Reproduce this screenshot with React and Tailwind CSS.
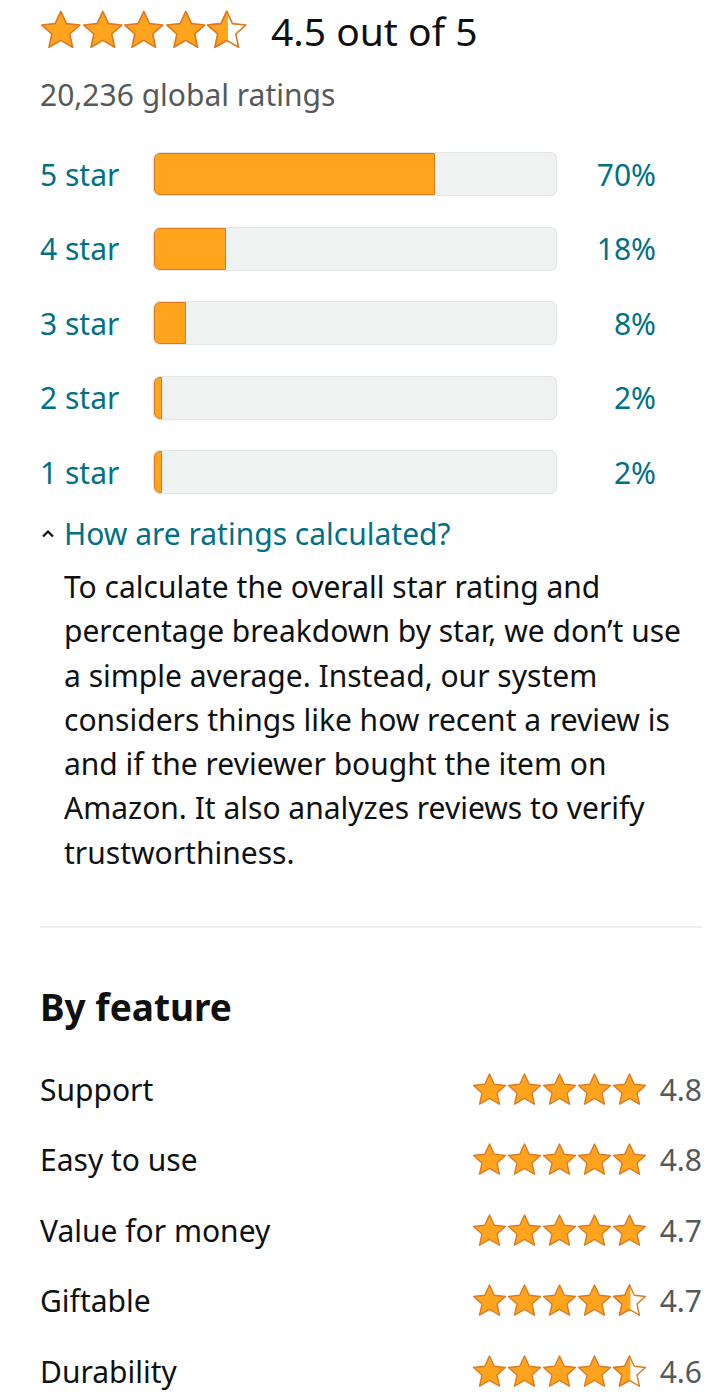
import React from 'react';

const FILL = '#ffa41c';
const EDGE = '#de7921';

const STAR_POINTS = '12,1.5 15.1,8.2 22.4,9 16.9,13.9 18.5,21.2 12,17.4 5.5,21.2 7.1,13.9 1.6,9 8.9,8.2';

const Star = ({ kind = 'full', size = 40, id }) => (
  <svg width={size} height={size} viewBox="0.6 0.2 22.8 22.8" className="shrink-0">
    {kind === 'half' && (
      <defs>
        <clipPath id={id}>
          <rect x="0" y="0" width="12.6" height="24" />
        </clipPath>
      </defs>
    )}
    <polygon points={STAR_POINTS} fill={kind === 'half' ? '#fff' : FILL} stroke={EDGE} strokeWidth="0.9" strokeLinejoin="round" />
    {kind === 'half' && (
      <polygon points={STAR_POINTS} fill={FILL} stroke={EDGE} strokeWidth="0.9" strokeLinejoin="round" clipPath={`url(#${id})`} />
    )}
  </svg>
);

const Stars = ({ half, size, prefix }) => (
  <div className="flex items-center">
    {[0, 1, 2, 3].map((i) => (
      <Star key={i} size={size} />
    ))}
    <Star kind={half ? 'half' : 'full'} size={size} id={`${prefix}-half`} />
  </div>
);

const bars = [
  { label: '5 star', pct: 70 },
  { label: '4 star', pct: 18 },
  { label: '3 star', pct: 8 },
  { label: '2 star', pct: 2 },
  { label: '1 star', pct: 2 },
];

const features = [
  { name: 'Support', value: '4.8', half: false },
  { name: 'Easy to use', value: '4.8', half: false },
  { name: 'Value for money', value: '4.7', half: false },
  { name: 'Giftable', value: '4.7', half: true },
  { name: 'Durability', value: '4.6', half: true },
];

const App = () => {
  return (
    <div className="w-[720px] min-h-[1400px] bg-white pl-10 pr-[18px] text-[#0f1111]" style={{ fontFamily: '"Noto Sans", "Open Sans", sans-serif' }}>
      {/* overall rating */}
      <div className="flex items-center h-[60px]">
        <Stars half size={41.6} prefix="top" />
        <span className="ml-[23px] text-[39px] leading-none">4.5 out of 5</span>
      </div>
      <div className="mt-[20px] text-[30px] leading-none text-[#565959]">20,236 global ratings</div>

      {/* histogram */}
      <div className="mt-[42px] flex flex-col gap-[30.5px]">
        {bars.map((b) => (
          <div key={b.label} className="flex items-center h-[44px]">
            <span className="w-[113px] text-[30px] text-[#007185]">{b.label}</span>
            <div className="relative w-[404px] h-[44px] rounded-[6px] bg-[#f0f2f2] border border-[#e3e6e6] overflow-hidden">
              <div
                className="h-full bg-[#ffa41c] border border-[#de7921] rounded-l-[6px]"
                style={{ width: `${b.pct}%`, minWidth: 6 }}
              />
            </div>
            <span className="w-[99px] text-right text-[30px] text-[#007185]">{b.pct}%</span>
          </div>
        ))}
      </div>

      {/* explainer */}
      <div className="mt-[25px] flex items-center">
        <svg width="16" height="16" viewBox="0 0 16 16" className="mr-[8px]">
          <path d="M3 10.5 L8 5.5 L13 10.5" fill="none" stroke="#0f1111" strokeWidth="2.2" />
        </svg>
        <span className="text-[30px] leading-none text-[#007185]">How are ratings calculated?</span>
      </div>
      <p className="mt-[16px] pl-6 pr-1 text-[30px] leading-[44.3px]">
        To calculate the overall star rating and percentage breakdown by star, we don’t use a simple average. Instead, our system considers things like how recent a review is and if the reviewer bought the item on Amazon. It also analyzes reviews to verify trustworthiness.
      </p>

      <div className="mt-[51px] h-[2px] bg-[#eeeeee]" />

      {/* by feature */}
      <h2 className="mt-[60px] text-[37px] font-bold leading-none">By feature</h2>
      <div className="mt-[29px] flex flex-col">
        {features.map((f, i) => (
          <div key={f.name} className="flex items-center justify-between h-[70.5px]">
            <span className="text-[30px]">{f.name}</span>
            <div className="flex items-center">
              <Stars half={f.half} size={35} prefix={`f${i}`} />
              <span className="ml-[13px] text-[30px] text-[#565959]">{f.value}</span>
            </div>
          </div>
        ))}
      </div>
    </div>
  );
};

export default App;
